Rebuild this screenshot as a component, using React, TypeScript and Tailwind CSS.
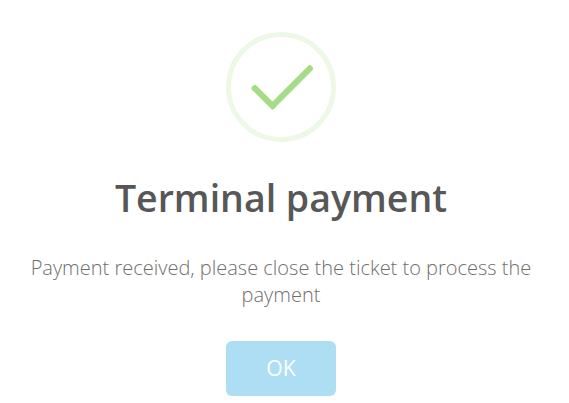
export default function App() {
  return (
    <main className="flex h-[403px] w-[562px] flex-col items-center bg-white pt-8 font-['Open_Sans',sans-serif]">
      <svg className="h-[110px] w-[110px] shrink-0" viewBox="0 0 110 110" fill="none" aria-hidden="true">
        <circle cx="55" cy="55" r="52.5" stroke="#edf8e7" strokeWidth="5" />
        <path d="M6 30L9.8 33.8M76.5 100L80 103.5" stroke="#dce9d5" strokeWidth="0.6" />
        <g fill="#a5dc86" transform="translate(-0.4 -0.5)">
          <rect x="22.5" y="62.5" width="31.25" height="6.25" rx="2.5" transform="rotate(45 38.125 65.625)" />
          <rect x="36.25" y="52.5" width="58.75" height="6.25" rx="2.5" transform="rotate(-45 65.625 55.625)" />
        </g>
      </svg>
      <h1 className="mt-[29px] whitespace-nowrap text-[37.5px] leading-[53px] font-semibold text-[#575757]">Terminal payment</h1>
      <p className="mt-[30px] w-[510px] text-center text-[20px] leading-[27px] font-light text-[#6f6f6f]">
        Payment received, please close the ticket to process the payment
      </p>
      <button className="mt-[33px] h-[55px] w-[110px] shrink-0 rounded-[6px] bg-[#aedef4] pb-[2px] text-[21.25px] text-white">OK</button>
    </main>
  );
}
